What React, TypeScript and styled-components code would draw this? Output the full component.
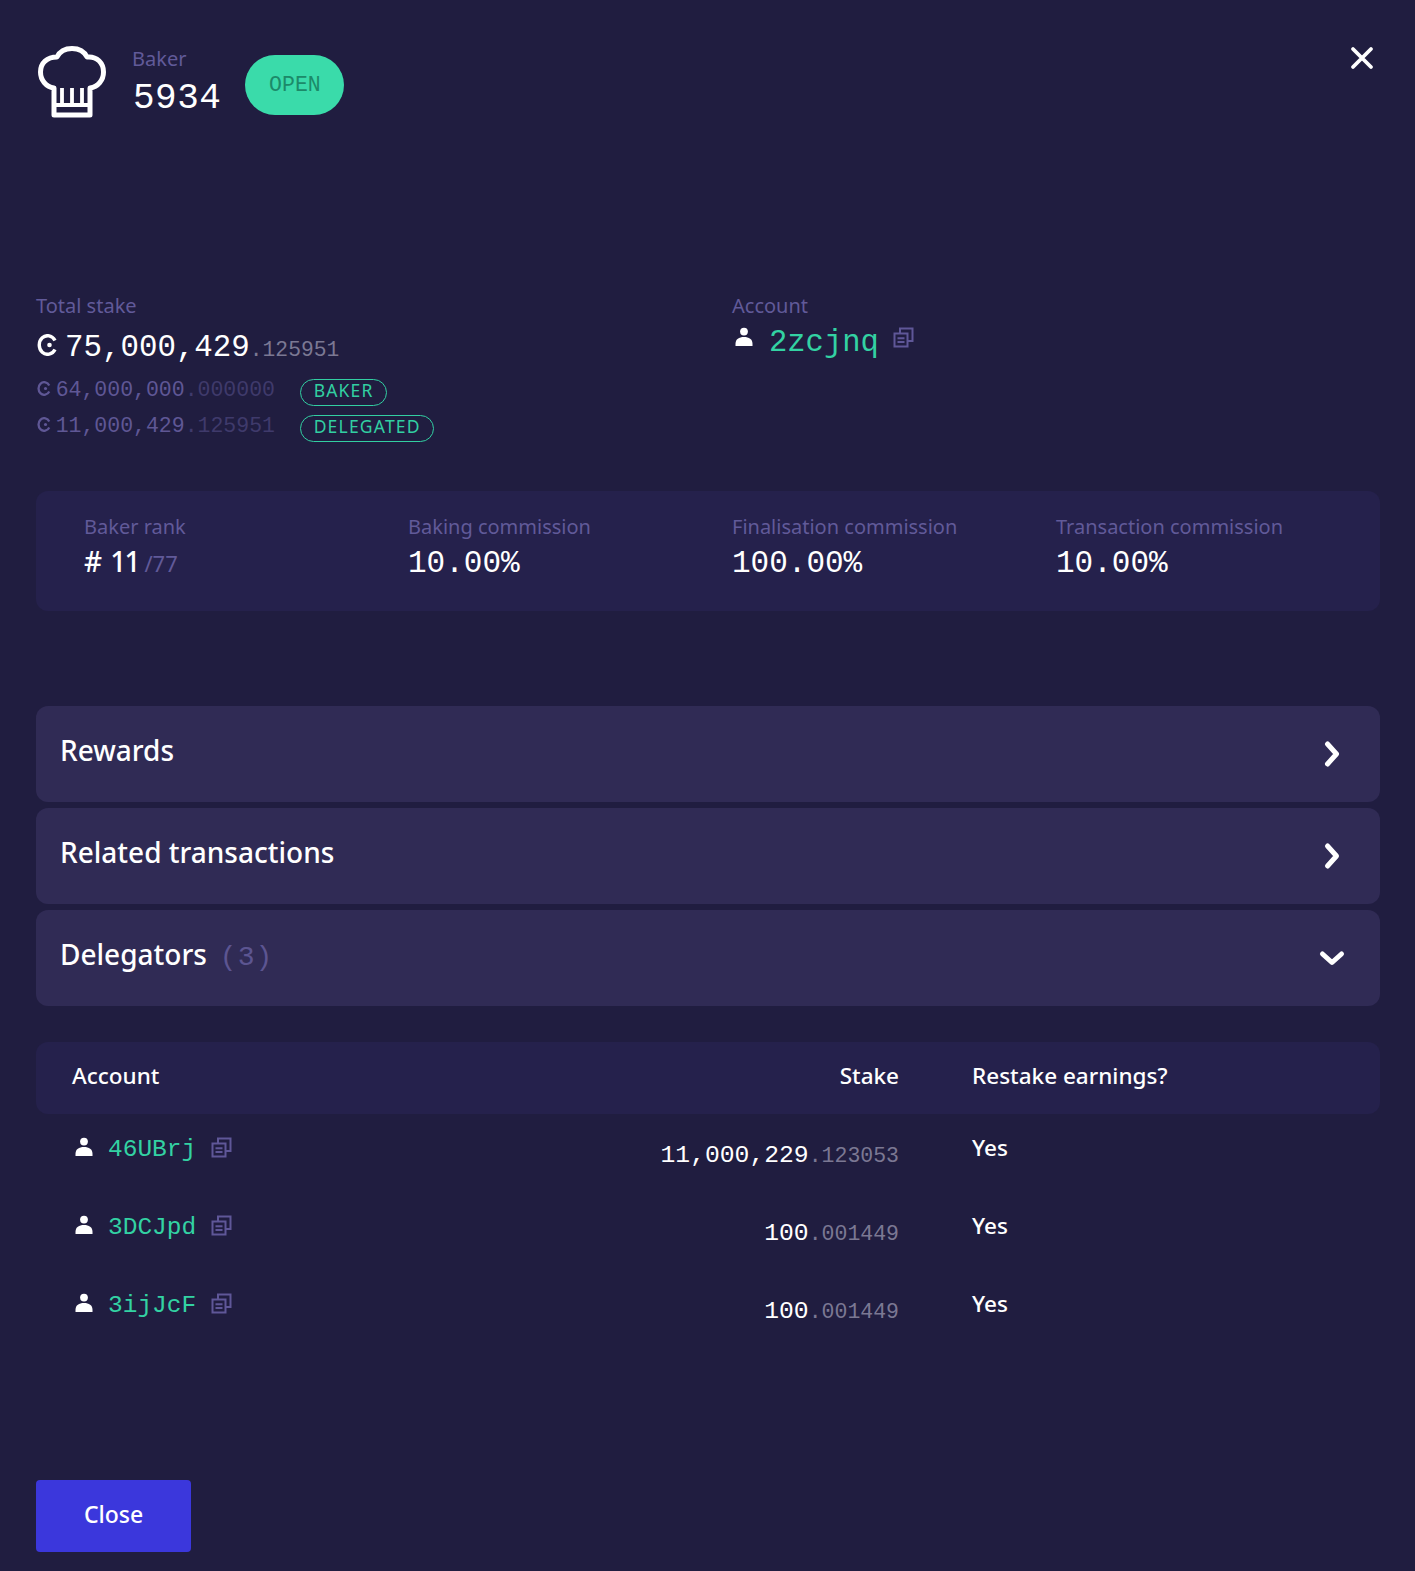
import React from "react";
import styled, { createGlobalStyle } from "styled-components";

const sans = `"Noto Sans", "Open Sans", sans-serif`;
const mono = `"Liberation Mono", "DejaVu Sans Mono", monospace`;

const GlobalStyle = createGlobalStyle`
  body {
    margin: 0;
    background: #201d40;
    font-family: ${sans};
    color: #fff;
  }
`;

const Page = styled.main`
  position: relative;
  box-sizing: border-box;
  height: 1571px;
  padding: 46px 35px 19px 36px;
  display: flex;
  flex-direction: column;
`;
const CloseX = styled.button`
  position: absolute;
  top: 46px;
  right: 41px;
  width: 24px;
  height: 24px;
  padding: 0;
  border: 0;
  background: none;
  color: #fff;
`;
const Header = styled.header`
  display: flex;
  align-items: flex-start;
  height: 72px;
`;
const HatWrap = styled.div`
  margin-left: 2px;
  width: 70px;
  height: 72px;
`;
const HeaderText = styled.div`
  margin-left: 24px;
  display: flex;
  flex-direction: column;
`;
const Label = styled.div`
  font-size: 20px;
  line-height: 26px;
  color: #615a99;
`;
const BakerId = styled.div`
  font-family: ${mono};
  font-size: 36px;
  letter-spacing: 0.5px;
  line-height: 46px;
  margin: 4px 0 0 1px;
`;
const OpenBadge = styled.div`
  margin: 9px 0 0 24px;
  width: 99px;
  height: 60px;
  border-radius: 30px;
  background: #3adbaa;
  color: #1c8a69;
  font-family: ${mono};
  font-size: 21.5px;
  display: flex;
  align-items: center;
  justify-content: center;
`;
const Info = styled.section`
  margin-top: 175px;
  display: grid;
  grid-template-columns: 696px 1fr;
  height: 198px;
`;
const Stake = styled.div`
  display: flex;
  flex-direction: column;
`;
const Amount = styled.div`
  display: flex;
  align-items: baseline;
  margin: 9px 0 2px;
  font-family: ${mono};
  font-size: 30.8px;
  line-height: 40px;
  color: #fff;
  svg {
    margin: 6px 8px 0 1px;
    align-self: flex-start;
  }
`;
const Decimal = styled.span<{ $color: string; $size: number }>`
  color: ${(p) => p.$color};
  font-size: ${(p) => p.$size}px;
`;
const SubRow = styled.div`
  display: flex;
  align-items: center;
  height: 36px;
  font-family: ${mono};
  font-size: 21.5px;
  color: #5f5795;
  svg {
    margin: 0 5px 4px 1px;
  }
`;
const SubValue = styled.span`
  width: 219px;
  margin-right: 25px;
  white-space: nowrap;
`;
const Tag = styled.span`
  box-sizing: border-box;
  height: 27px;
  margin-top: 4px;
  padding: 0 12px 4px 13px;
  border: 1px solid #32cfa2;
  border-radius: 14px;
  color: #32cfa2;
  font-family: ${sans};
  font-size: 17.5px;
  letter-spacing: 1.2px;
  display: flex;
  align-items: center;
`;
const AccountRow = styled.div<{ $gap: number }>`
  display: flex;
  align-items: center;
  gap: ${(p) => p.$gap}px;
`;
const AccountLink = styled.span<{ $size: number; $drop: number }>`
  font-family: ${mono};
  font-size: ${(p) => p.$size}px;
  padding-top: ${(p) => p.$drop}px;
  color: #33d2a3;
`;
const AccountBlock = styled.div`
  display: flex;
  flex-direction: column;
`;
const AccountTop = styled(AccountRow)`
  margin-top: -6px;
  margin-left: 3px;
  line-height: 36px;
  svg:last-child {
    margin-left: -2px;
  }
`;
const Stats = styled.section`
  display: grid;
  grid-template-columns: repeat(4, 1fr);
  height: 120px;
  padding: 23px 0 0 48px;
  box-sizing: border-box;
  background: #25214c;
  border-radius: 12px;
`;
const StatValue = styled.div`
  font-family: ${mono};
  font-size: 31px;
  line-height: 40px;
  margin-top: 4px;
  small {
    font-size: 22px;
    color: #615a99;
  }
`;
const RankValue = styled(StatValue)`
  font-family: ${sans};
  font-size: 28px;
  font-weight: 500;
  letter-spacing: -2px;
  word-spacing: 5px;
  margin-top: 1px;
  small {
    margin-left: 6px;
    font-weight: 400;
    letter-spacing: 0;
  }
`;
const Accordions = styled.section`
  margin-top: 95px;
  display: flex;
  flex-direction: column;
  gap: 6px;
`;
const AccordionRow = styled.div`
  box-sizing: border-box;
  height: 96px;
  padding: 0 34px 0 24px;
  background: #302b55;
  border-radius: 12px;
  display: flex;
  align-items: center;
  justify-content: space-between;
  font-size: 28px;
  font-weight: 500;
`;
const AccordionTitle = styled.span`
  padding-bottom: 8px;
  span {
    margin-left: 13px;
    color: #5c5591;
    font-family: ${mono};
    font-weight: 400;
    letter-spacing: 1px;
  }
`;
const TableHead = styled.div`
  box-sizing: border-box;
  margin-top: 36px;
  height: 72px;
  padding: 0 0 6px 36px;
  border-radius: 12px;
  background: #25214c;
  display: grid;
  grid-template-columns: 400px 427px 1fr;
  font-size: 22.5px;
  font-weight: 500;
  align-items: center;
`;
const Row = styled.div`
  box-sizing: border-box;
  height: 78px;
  display: grid;
  grid-template-columns: 397px 427px 1fr;
  padding: 0 0 12px 39px;
  font-size: 22.5px;
  font-weight: 500;
  align-items: center;
`;
const StakeHead = styled.span`
  text-align: right;
`;
const RightCell = styled.span`
  padding-left: 73px;
`;
const StakeCell = styled.span`
  text-align: right;
  font-family: ${mono};
  font-size: 24.7px;
  font-weight: 400;
  padding-top: 16px;
`;
const CloseButton = styled.button`
  margin-top: auto;
  width: 155px;
  height: 72px;
  padding: 0 0 4px;
  border: 0;
  border-radius: 4px;
  background: #3b37dc;
  color: #fff;
  font-family: ${sans};
  font-size: 23px;
  font-weight: 500;
`;

const Hat = () => (
  <svg width="70" height="72" viewBox="0 0 70 72" fill="none" stroke="#fff" strokeWidth="5" strokeLinejoin="round" strokeLinecap="round">
    <path d="M16 42C8 41 2.5 34 2.5 26C2.5 17 9 11 19 11C22 5 28 2.5 34 2.5C41 2.5 46 5 49 11C59 10 65.5 17 65.5 26C65.5 34 60 41 52 42L52 69L16 69Z" />
    <path d="M16 59H52M24 42V59M34 42V59M44 42V59" strokeWidth="3.8" strokeLinecap="butt" />
  </svg>
);

const Ccd = ({ size, color }: { size: number; color: string }) => (
  <svg width={(size * 20) / 22} height={size} viewBox="0 0 20 22" fill="none" stroke={color} strokeWidth="3.4">
    <path d="M18 6.5A8.4 9.3 0 1 0 18 15.5" />
    <circle cx="12.5" cy="11" r="2.3" fill={color} stroke="none" />
  </svg>
);

const User = () => (
  <svg width="18" height="20" viewBox="0 0 18 20" fill="#fff">
    <circle cx="9" cy="4.6" r="3.9" />
    <path d="M0.5 19V17C0.5 12 4 10 9 10S17.5 12 17.5 17V19Z" />
  </svg>
);

const Copy = () => (
  <svg width="21" height="21" viewBox="0 0 21 21" fill="none" stroke="#5f5798" strokeWidth="2">
    <path d="M7 6V1.5H19.5V14H14" />
    <rect x="1.5" y="6.5" width="13" height="13" />
    <path d="M4.5 11.2H11.5M4.5 15H11.5" />
  </svg>
);

const Chevron = ({ open }: { open?: boolean }) => (
  <svg width="28" height="28" viewBox="0 0 28 28" fill="none" stroke="#fff" strokeWidth="5" strokeLinecap="round" strokeLinejoin="round">
    <path d={open ? "M4.5 10L14 18.5L23.5 10" : "M9.5 4L18.5 14L9.5 24"} />
  </svg>
);

const delegators = [
  { id: "46UBrj", whole: "11,000,229", decimals: ".123053" },
  { id: "3DCJpd", whole: "100", decimals: ".001449" },
  { id: "3ijJcF", whole: "100", decimals: ".001449" },
];

const stats = [
  { label: "Baking commission", value: "10.00%" },
  { label: "Finalisation commission", value: "100.00%" },
  { label: "Transaction commission", value: "10.00%" },
];

const App = () => {
  return (
    <Page>
      <GlobalStyle />
      <CloseX aria-label="Close">
        <svg width="24" height="24" viewBox="0 0 24 24" stroke="currentColor" strokeWidth="3.8" strokeLinecap="round">
          <path d="M3 3L21 21M21 3L3 21" />
        </svg>
      </CloseX>
      <Header>
        <HatWrap>
          <Hat />
        </HatWrap>
        <HeaderText>
          <Label>Baker</Label>
          <BakerId>5934</BakerId>
        </HeaderText>
        <OpenBadge>OPEN</OpenBadge>
      </Header>
      <Info>
        <Stake>
          <Label>Total stake</Label>
          <Amount>
            <Ccd size={22} color="#fff" />
            75,000,429
            <Decimal $color="#7b7893" $size={21.3}>.125951</Decimal>
          </Amount>
          <SubRow>
            <Ccd size={15} color="#5f5795" />
            <SubValue>
              64,000,000<Decimal $color="#3f3a6b" $size={21.5}>.000000</Decimal>
            </SubValue>
            <Tag>BAKER</Tag>
          </SubRow>
          <SubRow>
            <Ccd size={15} color="#5f5795" />
            <SubValue>
              11,000,429<Decimal $color="#3f3a6b" $size={21.5}>.125951</Decimal>
            </SubValue>
            <Tag>DELEGATED</Tag>
          </SubRow>
        </Stake>
        <AccountBlock>
          <Label>Account</Label>
          <AccountTop $gap={16}>
            <User />
            <AccountLink $size={30.5} $drop={12}>2zcjnq</AccountLink>
            <Copy />
          </AccountTop>
        </AccountBlock>
      </Info>
      <Stats>
        <div>
          <Label>Baker rank</Label>
          <RankValue>
            # 11<small>/77</small>
          </RankValue>
        </div>
        {stats.map((stat) => (
          <div key={stat.label}>
            <Label>{stat.label}</Label>
            <StatValue>{stat.value}</StatValue>
          </div>
        ))}
      </Stats>
      <Accordions>
        <AccordionRow>
          <AccordionTitle>Rewards</AccordionTitle>
          <Chevron />
        </AccordionRow>
        <AccordionRow>
          <AccordionTitle>Related transactions</AccordionTitle>
          <Chevron />
        </AccordionRow>
        <AccordionRow>
          <AccordionTitle>
            Delegators<span>(3)</span>
          </AccordionTitle>
          <Chevron open />
        </AccordionRow>
      </Accordions>
      <TableHead>
        <span>Account</span>
        <StakeHead>Stake</StakeHead>
        <RightCell>Restake earnings?</RightCell>
      </TableHead>
      {delegators.map((d) => (
        <Row key={d.id}>
          <AccountRow $gap={15}>
            <User />
            <AccountLink $size={24.5} $drop={4}>{d.id}</AccountLink>
            <Copy />
          </AccountRow>
          <StakeCell>
            {d.whole}
            <Decimal $color="#7b7893" $size={21.5}>{d.decimals}</Decimal>
          </StakeCell>
          <RightCell>Yes</RightCell>
        </Row>
      ))}
      <CloseButton>Close</CloseButton>
    </Page>
  );
};

export default App;
